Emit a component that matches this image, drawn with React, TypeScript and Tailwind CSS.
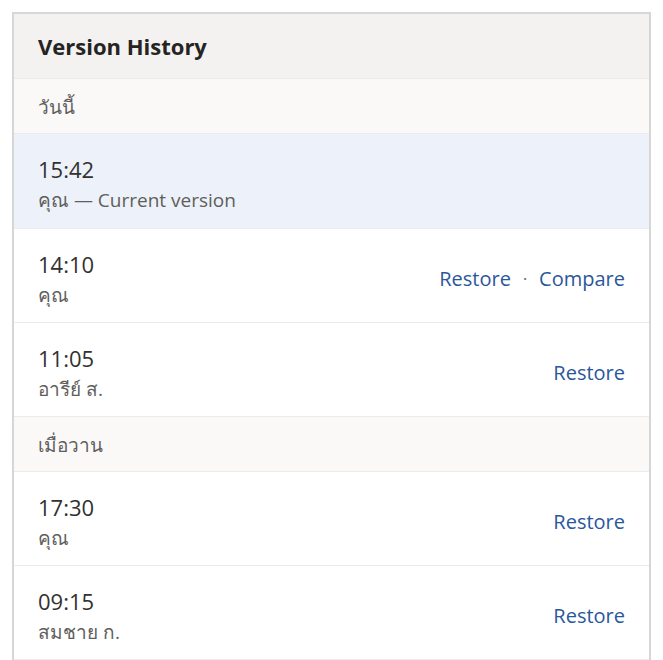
import React from 'react';

interface Version {
    time: string;
    author: string;
    current?: boolean;
    compare?: boolean;
}

interface Group {
    label: string;
    versions: Version[];
}

const groups: Group[] = [
    {
        label: 'วันนี้',
        versions: [
            { time: '15:42', author: 'คุณ', current: true },
            { time: '14:10', author: 'คุณ', compare: true },
            { time: '11:05', author: 'อารีย์ ส.' },
        ],
    },
    {
        label: 'เมื่อวาน',
        versions: [
            { time: '17:30', author: 'คุณ' },
            { time: '09:15', author: 'สมชาย ก.' },
        ],
    },
];

function VersionRow({ version }: { version: Version }) {
    return (
        <div
            className={`flex items-center justify-between px-6 pt-[20px] border-b border-[#edebe9] ${
                version.current ? 'bg-[#edf1f9] pb-[15px]' : 'bg-white pb-[14px]'
            }`}
        >
            <div className="flex flex-col">
                <span className="text-[22px] leading-[30px] text-[#323130]">{version.time}</span>
                <span className="mt-[3px] text-[19px] leading-[26px] text-[#605e5c]">
                    {version.author}
                    {version.current && ' — Current version'}
                </span>
            </div>
            {!version.current && (
                <div className="flex items-center text-[20px] leading-[28px] text-[#2b579a]">
                    <button className="hover:underline">Restore</button>
                    {version.compare && (
                        <>
                            <span className="mx-[12px] text-[#605e5c] text-[16px]">·</span>
                            <button className="hover:underline">Compare</button>
                        </>
                    )}
                </div>
            )}
        </div>
    );
}

export default function App() {
    return (
        <div className="p-3 bg-white min-h-screen" style={{ fontFamily: '"Open Sans", "Noto Sans", sans-serif' }}>
            <div className="border-2 border-[#d6d6d6] border-b-0 bg-white overflow-hidden">
                {/* Header */}
                <div className="px-6 py-[17px] bg-[#f3f2f1] border-b border-[#ebebeb]">
                    <h2 className="text-[22px] leading-[30px] font-bold text-[#252423]">Version History</h2>
                </div>

                {groups.map((group) => (
                    <div key={group.label}>
                        <div className="px-6 pt-[15px] pb-[13px] bg-[#faf9f8] border-b border-[#edebe9] text-[19px] leading-[26px] text-[#605e5c]">
                            {group.label}
                        </div>
                        {group.versions.map((v) => (
                            <VersionRow key={v.time} version={v} />
                        ))}
                    </div>
                ))}
            </div>
        </div>
    );
}
